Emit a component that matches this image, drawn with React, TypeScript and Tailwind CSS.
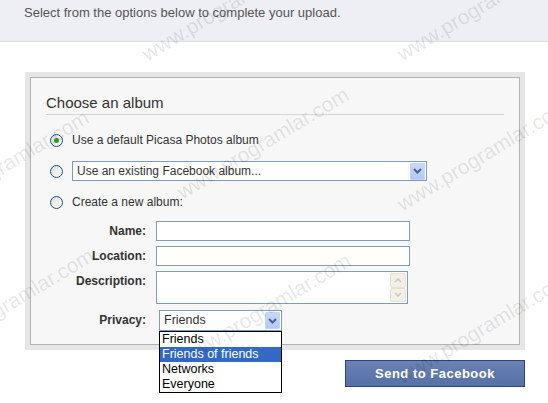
import React from 'react'

const watermarks = [
  'left-[150px] top-[42px]',
  'left-[405px] top-[42px]',
  'left-[-75px] top-[203px]',
  'left-[185px] top-[180px]',
  'left-[405px] top-[192px]',
  'left-[-70px] top-[341px]',
  'left-[187px] top-[346px]',
  'left-[405px] top-[365px]',
]

function Radio({ checked }: { checked?: boolean }) {
  return (
    <span className="ml-[4px] flex h-[13px] w-[13px] shrink-0 items-center justify-center rounded-full border border-[#1c5180] bg-gradient-to-br from-[#dcdcd7] to-white">
      {checked && <span className="h-[5px] w-[5px] rounded-full bg-[#21a121]" />}
    </span>
  )
}

function ComboArrow() {
  return (
    <span className="flex h-[17px] w-[15px] shrink-0 items-center justify-center rounded-[1px] border border-[#c3d3fd] bg-gradient-to-b from-[#c9d8fc] to-[#b1c7f7]">
      <svg width="9" height="6" viewBox="0 0 9 6">
        <path d="M1 1 L4.5 4.5 L8 1" fill="none" stroke="#4d6185" strokeWidth="2" />
      </svg>
    </span>
  )
}

function ScrollBtn({ up }: { up?: boolean }) {
  return (
    <span className="flex h-[15px] w-[16px] items-center justify-center rounded-[2px] border border-[#e3e1d3] bg-[#f3f1e7]">
      <svg width="8" height="5" viewBox="0 0 8 5">
        <path d={up ? 'M1 4 L4 1 L7 4' : 'M1 1 L4 4 L7 1'} fill="none" stroke="#c9c7ba" strokeWidth="1.5" />
      </svg>
    </span>
  )
}

export default function App() {
  return (
    <div className="relative h-[403px] w-[548px] overflow-hidden bg-white font-['Liberation_Sans',Arial,sans-serif]">
      <div className="h-[42px] border-b border-[#dcdfeb] bg-[#eeeef5] pl-[24px] pt-[5px] text-[13px] leading-[15px] text-[#555]">
        Select from the options below to complete your upload.
      </div>

      <div className="ml-[25px] mt-[30px] w-[500px] bg-[#e6e6e6] p-[5px]">
        <div className="h-[268px] border border-[#b2b2b2] bg-[#f7f7f7] px-[15px] pt-[16px] text-[#333]">
          <h2 className="border-b border-[#d4d4d4] pb-[3px] text-[15px] leading-[17px]">Choose an album</h2>

          <div className="mt-[15px] flex h-[20px] items-center text-[12px]">
            <Radio checked />
            <span className="ml-[9px]">Use a default Picasa Photos album</span>
          </div>

          <div className="mt-[11px] flex h-[20px] items-center text-[12px]">
            <Radio />
            <div className="ml-[9px] flex h-[20px] w-[355px] items-center justify-between border border-[#7f9db9] bg-white pl-[4px] pr-[1px]">
              <span>Use an existing Facebook album...</span>
              <ComboArrow />
            </div>
          </div>

          <div className="mt-[11px] flex h-[20px] items-center text-[12px]">
            <Radio />
            <span className="ml-[9px]">Create a new album:</span>
          </div>

          <div className="mt-[9px] grid grid-cols-[100px_254px] gap-x-[10px] gap-y-[5px] text-[12px]">
            <label className="text-right font-bold leading-[20px]">Name:</label>
            <div className="h-[20px] border border-[#7f9db9] bg-white" />

            <label className="text-right font-bold leading-[20px]">Location:</label>
            <div className="h-[20px] border border-[#7f9db9] bg-white" />

            <label className="text-right font-bold leading-[20px]">Description:</label>
            <div className="flex h-[33px] w-[252px] justify-end border border-[#7f9db9] bg-white p-[1px]">
              <div className="flex flex-col">
                <ScrollBtn up />
                <ScrollBtn />
              </div>
            </div>

            <label className="mt-[1px] text-right font-bold leading-[21px]">Privacy:</label>
            <div className="relative ml-[3px] mt-[1px] w-[123px]">
              <div className="flex h-[21px] items-center justify-between border border-[#7f9db9] bg-white pl-[4px] pr-[1px] text-[12.5px]">
                <span>Friends</span>
                <ComboArrow />
              </div>
              <ul className="absolute left-0 top-full w-[123px] border border-black bg-white text-[12.5px] leading-[15px] text-black">
                <li className="pl-[2px]">Friends</li>
                <li className="bg-[#316ac5] pl-[2px] text-white">Friends of friends</li>
                <li className="pl-[2px]">Networks</li>
                <li className="pl-[2px]">Everyone</li>
              </ul>
            </div>
          </div>
        </div>
      </div>

      <div className="mt-[10px] flex justify-end pr-[23px]">
        <button className="h-[27px] w-[180px] border border-[#29447e] bg-gradient-to-b from-[#6a82b4] to-[#5670a6] text-[13px] font-bold tracking-[0.5px] text-white">
          Send to Facebook
        </button>
      </div>

      {watermarks.map((pos) => (
        <div
          key={pos}
          className={`pointer-events-none absolute ${pos} origin-bottom-left -rotate-[31deg] whitespace-nowrap text-[21px] leading-[24px] text-black/[0.1]`}
        >
          www.programlar.com
        </div>
      ))}
    </div>
  )
}
